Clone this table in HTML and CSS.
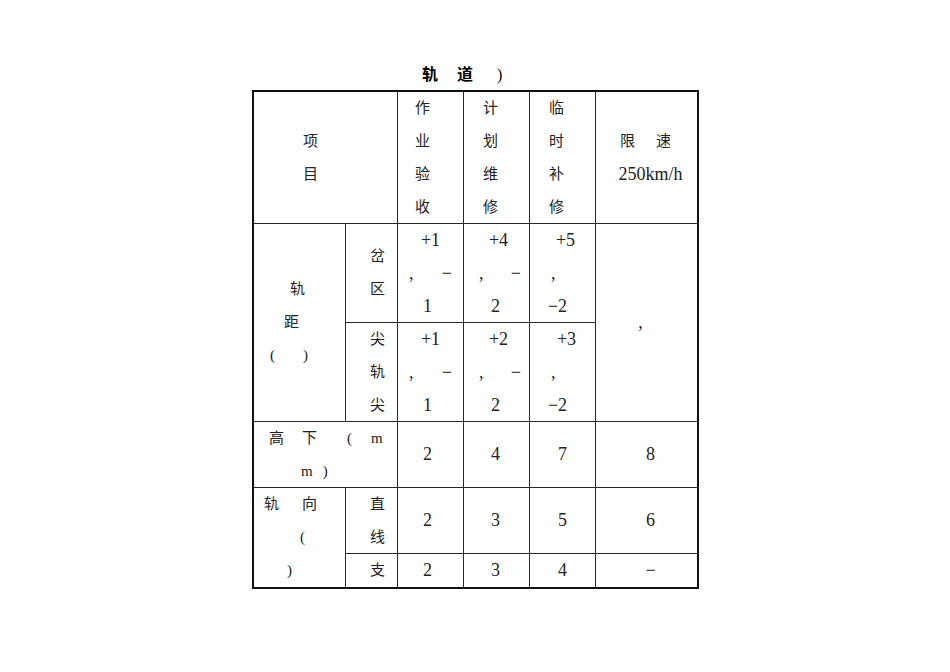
FILE: index.html
```html
<!DOCTYPE html>
<html lang="zh-CN">
<head>
<meta charset="utf-8">
<title>轨道</title>
<link rel="stylesheet" href="styles.css">
</head>
<body>
<div class="page">
  <div class="title"><span>轨</span><span class="t2">道</span><span class="t3">)</span></div>
  <div class="tbl">
    <!-- header -->
    <div class="cell span2 hd-item"><div class="ln">项</div><div class="ln">目</div></div>
    <div class="cell hc hc3"><div class="ln">作</div><div class="ln">业</div><div class="ln">验</div><div class="ln">收</div></div>
    <div class="cell hc hc4"><div class="ln">计</div><div class="ln">划</div><div class="ln">维</div><div class="ln">修</div></div>
    <div class="cell hc hc5"><div class="ln">临</div><div class="ln">时</div><div class="ln">补</div><div class="ln">修</div></div>
    <div class="cell hc6"><div class="ln pair"><span>限</span><span>速</span></div><div class="ln n sp">250km/h</div></div>

    <!-- 轨距 -->
    <div class="cell rows2 lft gauge">
      <div class="ln g1">轨</div>
      <div class="ln g2">距</div>
      <div class="ln g3"><span>(</span><span class="g3b">)</span></div>
    </div>
    <div class="cell lft sub"><div class="ln">岔</div><div class="ln">区</div></div>
    <div class="cell v">
      <div class="ln n">+1</div>
      <div class="ln n cm c3cm"><span>,</span><span>−</span></div>
      <div class="ln n s-3">1</div>
    </div>
    <div class="cell v">
      <div class="ln n s2">+4</div>
      <div class="ln n cm c4cm"><span>,</span><span>−</span></div>
      <div class="ln n s-1">2</div>
    </div>
    <div class="cell v">
      <div class="ln n s3">+5</div>
      <div class="ln n cm c5cm"><span>,</span></div>
      <div class="ln n s-5">−2</div>
    </div>
    <div class="cell rows2 v lastc"><div class="ln n">,</div></div>

    <div class="cell lft sub"><div class="ln">尖</div><div class="ln">轨</div><div class="ln">尖</div></div>
    <div class="cell v">
      <div class="ln n">+1</div>
      <div class="ln n cm c3cm"><span>,</span><span>−</span></div>
      <div class="ln n s-3">1</div>
    </div>
    <div class="cell v">
      <div class="ln n s2">+2</div>
      <div class="ln n cm c4cm"><span>,</span><span>−</span></div>
      <div class="ln n s-1">2</div>
    </div>
    <div class="cell v">
      <div class="ln n s4">+3</div>
      <div class="ln n cm c5cm"><span>,</span></div>
      <div class="ln n s-5">−2</div>
    </div>

    <!-- 高下 -->
    <div class="cell span2 lft level">
      <div class="ln l1"><span>高</span><span class="l1b">下</span><span class="l1c">(</span><span class="l1d">m</span></div>
      <div class="ln l2"><span>m</span><span class="l2b">)</span></div>
    </div>
    <div class="cell v"><div class="ln n s-3">2</div></div>
    <div class="cell v"><div class="ln n s-1">4</div></div>
    <div class="cell v"><div class="ln n">7</div></div>
    <div class="cell v"><div class="ln n s4">8</div></div>

    <!-- 轨向 -->
    <div class="cell rows2 lft align">
      <div class="ln a1"><span>轨</span><span class="a1b">向</span></div>
      <div class="ln a2">(</div>
      <div class="ln a3">)</div>
    </div>
    <div class="cell lft sub"><div class="ln">直</div><div class="ln">线</div></div>
    <div class="cell v"><div class="ln n s-3">2</div></div>
    <div class="cell v"><div class="ln n s-1">3</div></div>
    <div class="cell v"><div class="ln n">5</div></div>
    <div class="cell v"><div class="ln n s4">6</div></div>

    <div class="cell lft sub"><div class="ln">支</div></div>
    <div class="cell v"><div class="ln n s-3">2</div></div>
    <div class="cell v"><div class="ln n s-1">3</div></div>
    <div class="cell v"><div class="ln n">4</div></div>
    <div class="cell v"><div class="ln n s4">−</div></div>
  </div>
</div>
</body>
</html>
```

FILE: styles.css
```css
* { box-sizing: border-box; }
html, body { margin: 0; padding: 0; background: #fff; }
body {
  font-family: "Liberation Serif", "Noto Sans CJK SC", serif;
  font-size: 15px;
  color: #222;
  width: 950px;
  height: 672px;
  overflow: hidden;
}
.page { padding-top: 65px; }

.title {
  display: flex;
  margin-left: 422px;
  height: 20px;
  line-height: 20px;
  font-size: 16px;
  font-weight: bold;
  color: #000;
  margin-bottom: 5px;
}
.title .t2 { margin-left: 19px; }
.title .t3 { margin-left: 24px; font-weight: normal; }

.tbl {
  margin-left: 252px;
  width: 447px;
  display: grid;
  grid-template-columns: 91px 51px 65px 65px 65px 101px;
  grid-template-rows: 131px 98px 98px 65px 65px 33px;
  gap: 1px;
  background: #2a2a2a;
  border: 2px solid #111;
}
.cell {
  background: #fff;
  display: flex;
  flex-direction: column;
  justify-content: center;
  overflow: visible;
  text-align: center;
}
.span2 { grid-column: span 2; }
.rows2 { grid-row: span 2; }
.ln { height: 33px; line-height: 33px; white-space: pre; }
.n { font-size: 18px; }
.lft { text-align: left; }

/* header */
.hd-item { padding-right: 30px; }
.hc3 { padding-right: 16px; }
.hc4, .hc5 { padding-right: 12px; }
.pair { display: flex; justify-content: center; gap: 21px; padding-right: 2px; }
.hc6 .sp { padding-left: 8px; }

/* value shifts */
.s-1 { padding-right: 2px; }
.s-3 { padding-right: 6px; }
.s-5 { padding-right: 10px; }
.s2 { padding-left: 4px; }
.s3 { padding-left: 6px; }
.s4 { padding-left: 8px; }

.cm { display: flex; justify-content: space-between; }
.c3cm { padding: 0 11px 0 11px; }
.c4cm { padding: 0 8px 0 15px; }
.c5cm { padding: 0 0 0 21px; }
.lastc { padding-right: 12px; }

/* sub column */
.sub { padding-left: 24px; }

/* 轨距 */
.g1 { padding-left: 36px; }
.g2 { padding-left: 30px; }
.g3 { padding-left: 16px; }
.g3b { margin-left: 28px; }

/* 高下 */
.l1 { padding-left: 15px; }
.l1b { margin-left: 18px; }
.l1c { margin-left: 30px; }
.l1d { margin-left: 19px; }
.l2 { padding-left: 47px; }
.l2b { margin-left: 10px; }

/* 轨向 */
.a1 { padding-left: 10px; }
.a1b { margin-left: 23px; }
.a2 { padding-left: 46px; }
.a3 { padding-left: 33px; }
```
